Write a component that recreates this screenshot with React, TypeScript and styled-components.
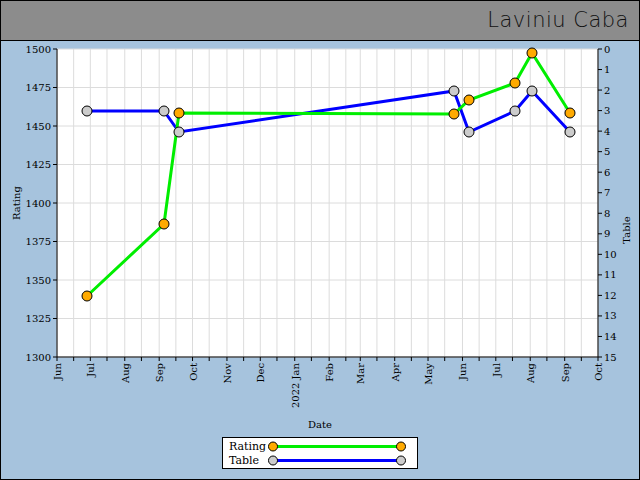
import React from "react";
import styled, { createGlobalStyle } from "styled-components";

const Global = createGlobalStyle`
  html, body { margin: 0; padding: 0; }
  body { font-family: "DejaVu Serif", serif; }
`;

const Frame = styled.div`
  width: 640px; height: 480px; box-sizing: border-box;
  border: 1px solid #000; display: flex; flex-direction: column;
  background: #a6c3dd;
`;
const Header = styled.div`
  height: 40px; box-sizing: border-box; flex: none;
  background: #8c8c8c; border-bottom: 1px solid #000;
  display: flex; align-items: center; justify-content: flex-end;
  padding: 0 10px 2px 0;
`;
const Title = styled.div`
  font-family: "DejaVu Sans", sans-serif; font-weight: 200;
  font-size: 21px; color: #111; letter-spacing: 0.5px;
`;
const Body = styled.div`
  flex: 1; display: flex; flex-direction: column; align-items: center;
`;
const Legend = styled.div`
  margin-top: 1px; width: 196px; height: 32px; box-sizing: border-box;
  background: #fff; border: 1px solid #000; display: grid;
  grid-template-columns: 38px 1fr; align-items: center; padding: 1px 0 1px 6px;
  font-family: "DejaVu Serif", serif; font-size: 11px; line-height: 13px;
`;

const X0 = 57, X1 = 598, Y0 = 49, Y1 = 357;
const start = Date.UTC(2021, 5, 1), end = Date.UTC(2022, 9, 1);
const xOf = (t: number) => X0 + ((t - start) / (end - start)) * (X1 - X0);
const months = ["Jun","Jul","Aug","Sep","Oct","Nov","Dec","Jan","Feb","Mar","Apr","May","Jun","Jul","Aug","Sep","Oct"];
const monthX = months.map((_, i) => xOf(Date.UTC(2021, 5 + i, 1)));
const midX = months.slice(0, -1).map((_, i) => xOf(Date.UTC(2021, 5 + i, 16)));

const rating: [number, number][] = [[87,296],[164,224],[179,113],[454,114],[469,100],[515,83],[532,53],[570,113]];
const table: [number, number][] = [[87,111],[164,111],[179,132],[454,91],[469,132],[515,111],[532,91],[570,132]];

const Chart = () => {
  const rows = [1500,1475,1450,1425,1400,1375,1350,1325,1300];
  const ry = (v: number) => Y0 + ((1500 - v) / 200) * (Y1 - Y0);
  const ty = (v: number) => Y0 + (v / 15) * (Y1 - Y0);
  const pts = (a: [number, number][]) => a.map(p => p.join(",")).join(" ");
  return (
    <svg width={640} height={395} viewBox="0 41 640 395" style={{ display: "block", flex: "none" }}>
      <g fontFamily="DejaVu Serif, serif" fontSize={10} fill="#000">
        <rect x={X0} y={Y0} width={X1 - X0} height={Y1 - Y0} fill="#fff" />
        {[...monthX, ...midX].map((x, i) => (
          <line key={"v" + i} x1={x} x2={x} y1={Y0} y2={Y1} stroke="#dcdcdc" />
        ))}
        {rows.map(v => <line key={"h" + v} x1={X0} x2={X1} y1={ry(v)} y2={ry(v)} stroke="#dcdcdc" />)}
        <line x1={X0} x2={X0} y1={Y0} y2={Y1} stroke="#000" />
        <line x1={X1} x2={X1} y1={Y0} y2={Y1} stroke="#000" />
        <line x1={X0} x2={X1} y1={Y1} y2={Y1} stroke="#000" />
        {rows.map(v => (
          <g key={"l" + v}>
            <line x1={X0 - 4} x2={X0} y1={ry(v)} y2={ry(v)} stroke="#000" />
            <text x={X0 - 6} y={ry(v) + 3.5} textAnchor="end">{v}</text>
          </g>
        ))}
        {Array.from({ length: 16 }, (_, i) => (
          <g key={"t" + i}>
            <line x1={X1} x2={X1 + 4} y1={ty(i)} y2={ty(i)} stroke="#000" />
            <text x={X1 + 6} y={ty(i) + 3.5}>{i}</text>
          </g>
        ))}
        {[...monthX, ...midX].map((x, i) => (
          <line key={"bt" + i} x1={x} x2={x} y1={Y1} y2={Y1 + 4} stroke="#000" />
        ))}
        {months.map((m, i) => (
          <text key={"m" + i} transform={`translate(${monthX[i] + 4},${Y1 + 6}) rotate(-90)`} textAnchor="end">
            {i === 7 ? "2022 Jan" : m}
          </text>
        ))}
        <text x={320} y={428} textAnchor="middle">Date</text>
        <text transform="translate(20,203) rotate(-90)" textAnchor="middle">Rating</text>
        <text transform="translate(630,230) rotate(-90)" textAnchor="middle">Table</text>
        <polyline points={pts(table)} fill="none" stroke="#0000ff" strokeWidth={3} />
        <polyline points={pts(rating)} fill="none" stroke="#00ee00" strokeWidth={3} />
        {table.map(([x, y], i) => <circle key={"tc" + i} cx={x} cy={y} r={5} fill="#cccccc" stroke="#000" />)}
        {rating.map(([x, y], i) => <circle key={"rc" + i} cx={x} cy={y} r={5} fill="#ffaa00" stroke="#000" />)}
      </g>
    </svg>
  );
};

const Sample = ({ color, fill }: { color: string; fill: string }) => (
  <svg width={140} height={13} style={{ display: "block" }}>
    <line x1={6} x2={134} y1={6.5} y2={6.5} stroke={color} strokeWidth={3} />
    <circle cx={6} cy={6.5} r={4.5} fill={fill} stroke="#000" />
    <circle cx={134} cy={6.5} r={4.5} fill={fill} stroke="#000" />
  </svg>
);

export default function App() {
  return (
    <>
      <Global />
      <Frame>
        <Header><Title>Laviniu Caba</Title></Header>
        <Body>
          <Chart />
          <Legend>
            <span>Rating</span>
            <Sample color="#00ee00" fill="#ffaa00" />
            <span>Table</span>
            <Sample color="#0000ff" fill="#cccccc" />
          </Legend>
        </Body>
      </Frame>
    </>
  );
}
